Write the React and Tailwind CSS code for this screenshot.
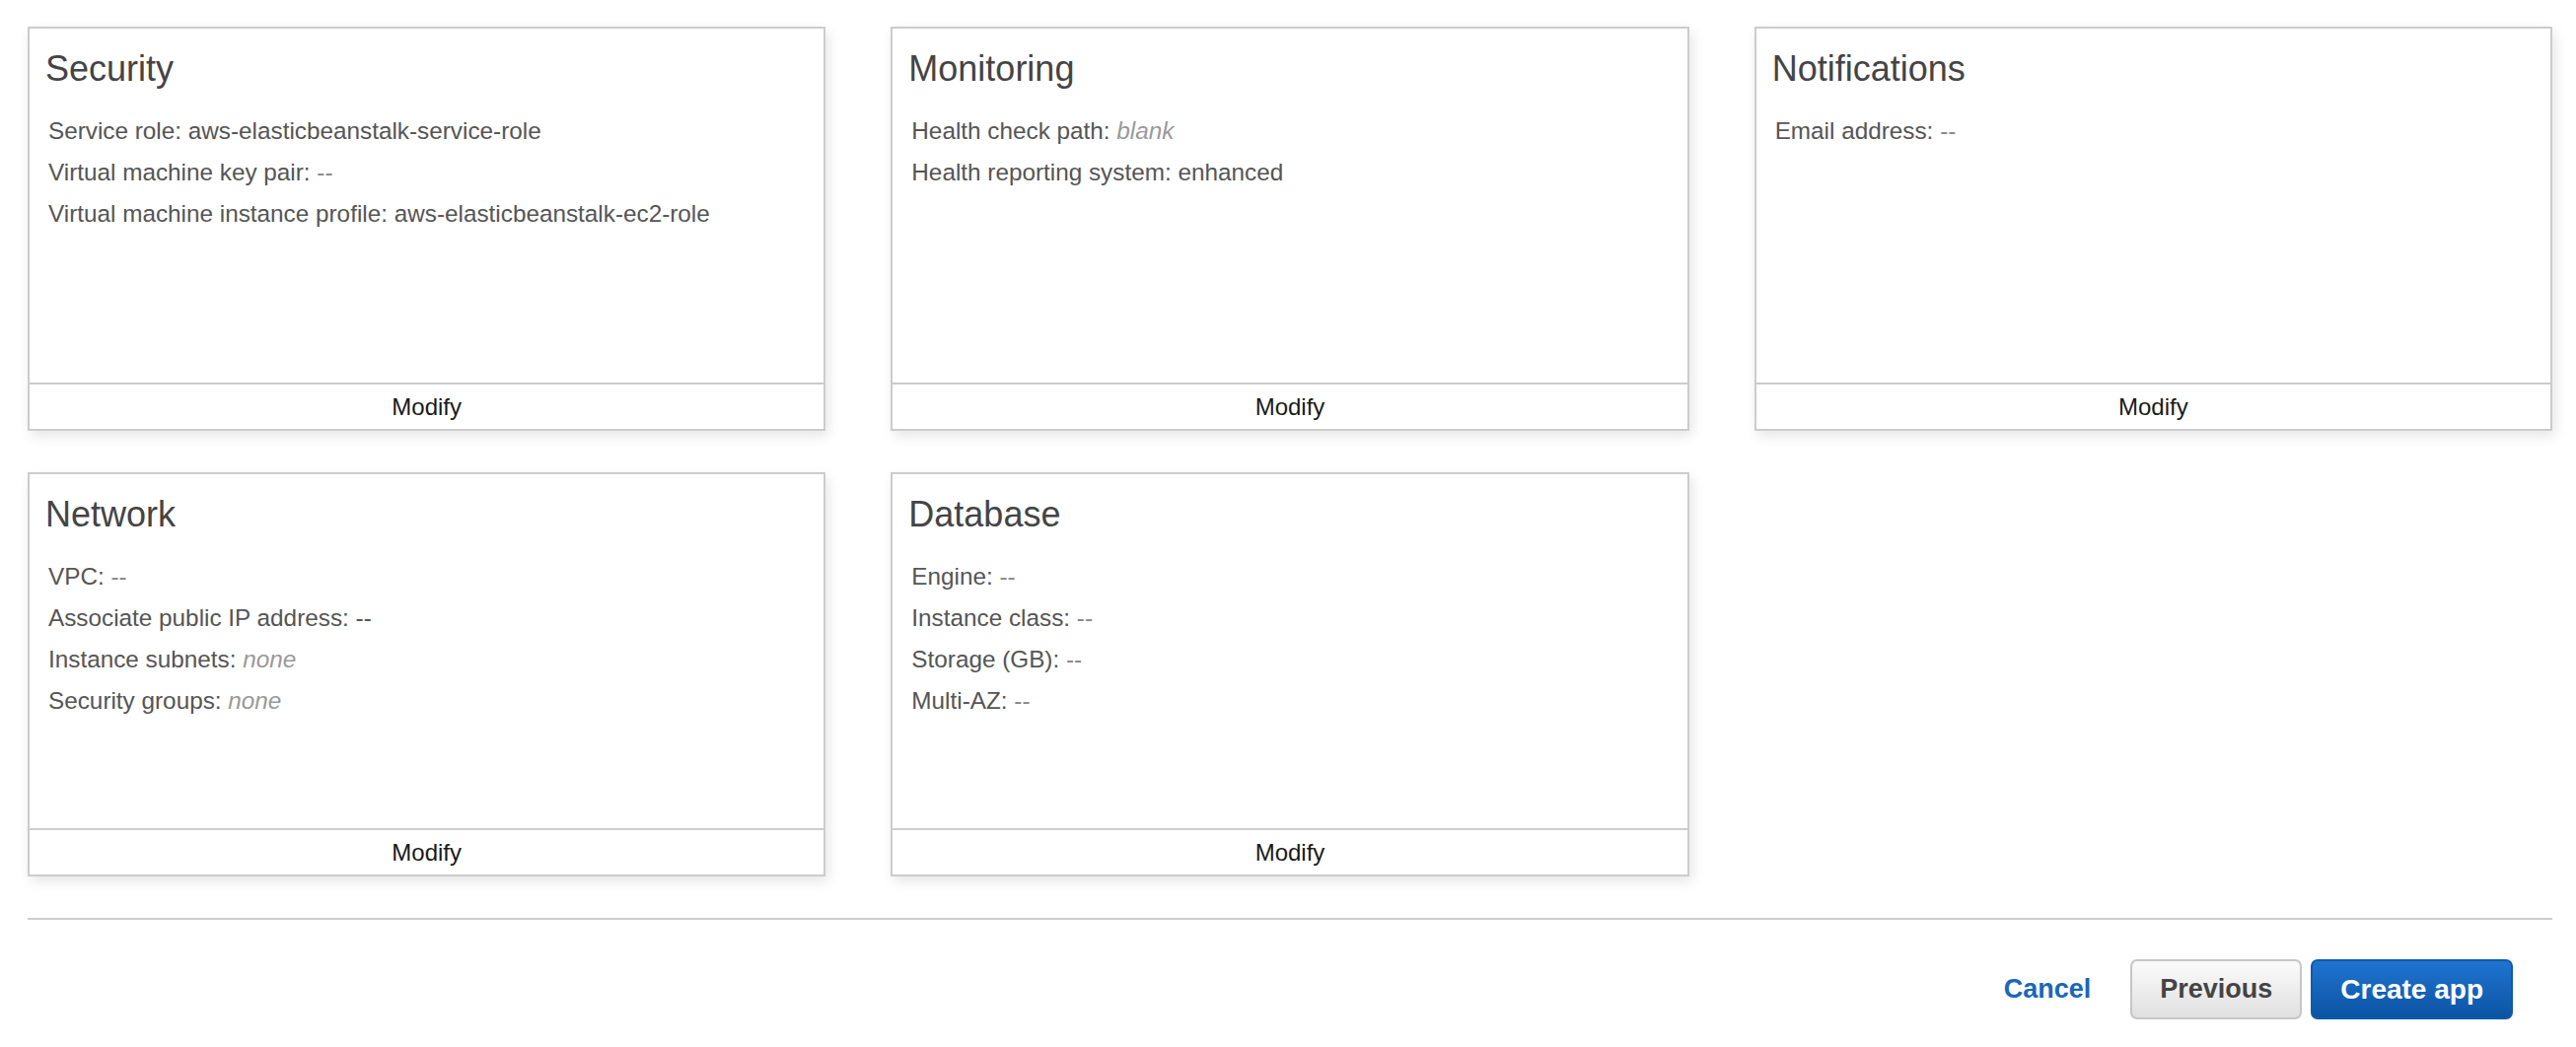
import React from 'react';

const cards = [
  {
    title: 'Security',
    rows: [
      { label: 'Service role:', value: 'aws-elasticbeanstalk-service-role' },
      { label: 'Virtual machine key pair:', value: '--', muted: true },
      { label: 'Virtual machine instance profile:', value: 'aws-elasticbeanstalk-ec2-role' },
    ],
  },
  {
    title: 'Monitoring',
    rows: [
      { label: 'Health check path:', value: 'blank', italic: true },
      { label: 'Health reporting system:', value: 'enhanced' },
    ],
  },
  {
    title: 'Notifications',
    rows: [{ label: 'Email address:', value: '--', muted: true }],
  },
  {
    title: 'Network',
    rows: [
      { label: 'VPC:', value: '--', muted: true },
      { label: 'Associate public IP address:', value: '--' },
      { label: 'Instance subnets:', value: 'none', italic: true },
      { label: 'Security groups:', value: 'none', italic: true },
    ],
  },
  {
    title: 'Database',
    rows: [
      { label: 'Engine:', value: '--', muted: true },
      { label: 'Instance class:', value: '--', muted: true },
      { label: 'Storage (GB):', value: '--', muted: true },
      { label: 'Multi-AZ:', value: '--', muted: true },
    ],
  },
];

function ConfigCard({ title, rows }) {
  return (
    <div className="flex h-[410px] flex-col border-2 border-[#cccccc] bg-white shadow-[3px_5px_12px_rgba(0,0,0,0.10)]">
      <h2 className="pl-[16px] pt-[21px] text-[36px] leading-[40px] text-[#444444]">{title}</h2>
      <div className="mt-[22px] pl-[19px] text-[24.3px] leading-[42px] text-[#555555]">
        {rows.map((row) => (
          <div key={row.label}>
            {row.label}{' '}
            <span
              className={
                row.italic
                  ? 'italic text-[#999999]'
                  : row.muted
                  ? 'text-[#8a8a8a]'
                  : ''
              }
            >
              {row.value}
            </span>
          </div>
        ))}
      </div>
      <button className="mt-auto flex h-[47px] items-center justify-center border-t-2 border-[#cccccc] text-[24px] text-[#1a1a1a]">
        Modify
      </button>
    </div>
  );
}

export default function App() {
  return (
    <div className="min-h-[1062px] bg-white pl-[28px] pr-[24px] pt-[27px] font-['Liberation_Sans',Arial,sans-serif]">
      <div className="grid grid-cols-3 gap-x-[66px] gap-y-[42px]">
        {cards.map((card) => (
          <ConfigCard key={card.title} {...card} />
        ))}
      </div>

      <hr className="mt-[42px] border-t-2 border-[#cccccc]" />

      <div className="mt-[40px] flex items-center justify-end pr-[40px]">
        <button className="mr-[40px] text-[27px] font-bold text-[#1a66bb]">Cancel</button>
        <button className="h-[61px] rounded-[7px] border-2 border-[#c6c6c6] bg-gradient-to-b from-[#fbfbfb] to-[#e0e0e0] px-[28px] text-[27px] font-bold text-[#444444]">
          Previous
        </button>
        <button className="ml-[9px] h-[61px] rounded-[7px] border-2 border-[#125aa8] bg-gradient-to-b from-[#1f74d2] to-[#0b54a3] px-[28px] text-[28px] font-bold text-white">
          Create app
        </button>
      </div>
    </div>
  );
}
